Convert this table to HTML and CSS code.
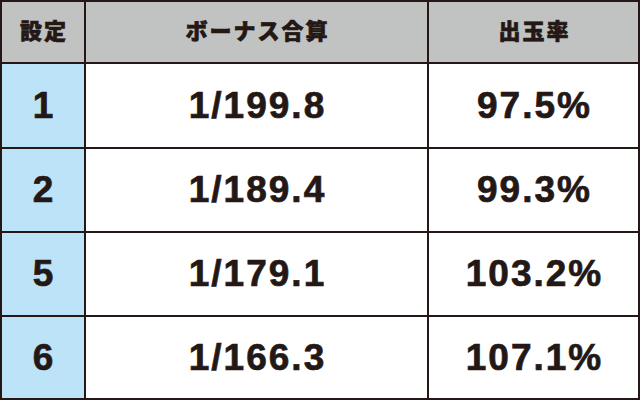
FILE: index.html
```html
<!DOCTYPE html>
<html lang="ja">
<head>
<meta charset="utf-8">
<link rel="stylesheet" href="styles.css">
</head>
<body>
<div class="table">
  <div class="cell head">設定</div>
  <div class="cell head">ボーナス合算</div>
  <div class="cell head">出玉率</div>

  <div class="cell setting">1</div>
  <div class="cell num">1/199.8</div>
  <div class="cell num">97.5%</div>

  <div class="cell setting">2</div>
  <div class="cell num">1/189.4</div>
  <div class="cell num">99.3%</div>

  <div class="cell setting">5</div>
  <div class="cell num">1/179.1</div>
  <div class="cell num">103.2%</div>

  <div class="cell setting">6</div>
  <div class="cell num">1/166.3</div>
  <div class="cell num">107.1%</div>
</div>
</body>
</html>
```

FILE: styles.css
```css
html, body {
  margin: 0;
  padding: 0;
  background: #ffffff;
}

.table {
  width: 640px;
  height: 400px;
  box-sizing: border-box;
  display: grid;
  grid-template-columns: 82px 341px 209px;
  grid-template-rows: 60px 83px 82px 82px 81px;
  gap: 2px;
  padding: 2px;
  background: #231815;
}

.cell {
  display: flex;
  align-items: center;
  justify-content: center;
  background: #ffffff;
  color: #231815;
}

.head {
  background: #c1c2c2;
  font-family: "Noto Sans CJK JP", "Noto Sans", sans-serif;
  font-weight: 900;
  font-size: 22px;
  letter-spacing: 2px;
  -webkit-text-stroke: 0.6px #231815;
  padding-bottom: 6px;
  padding-left: 2px;
  box-sizing: border-box;
}

.setting {
  background: #bde3f8;
}

.setting, .num {
  font-family: "Liberation Sans", Arial, sans-serif;
  font-weight: 700;
  font-size: 37px;
  letter-spacing: 2px;
  -webkit-text-stroke: 0.7px #231815;
  padding-left: 2px;
  box-sizing: border-box;
}
```
